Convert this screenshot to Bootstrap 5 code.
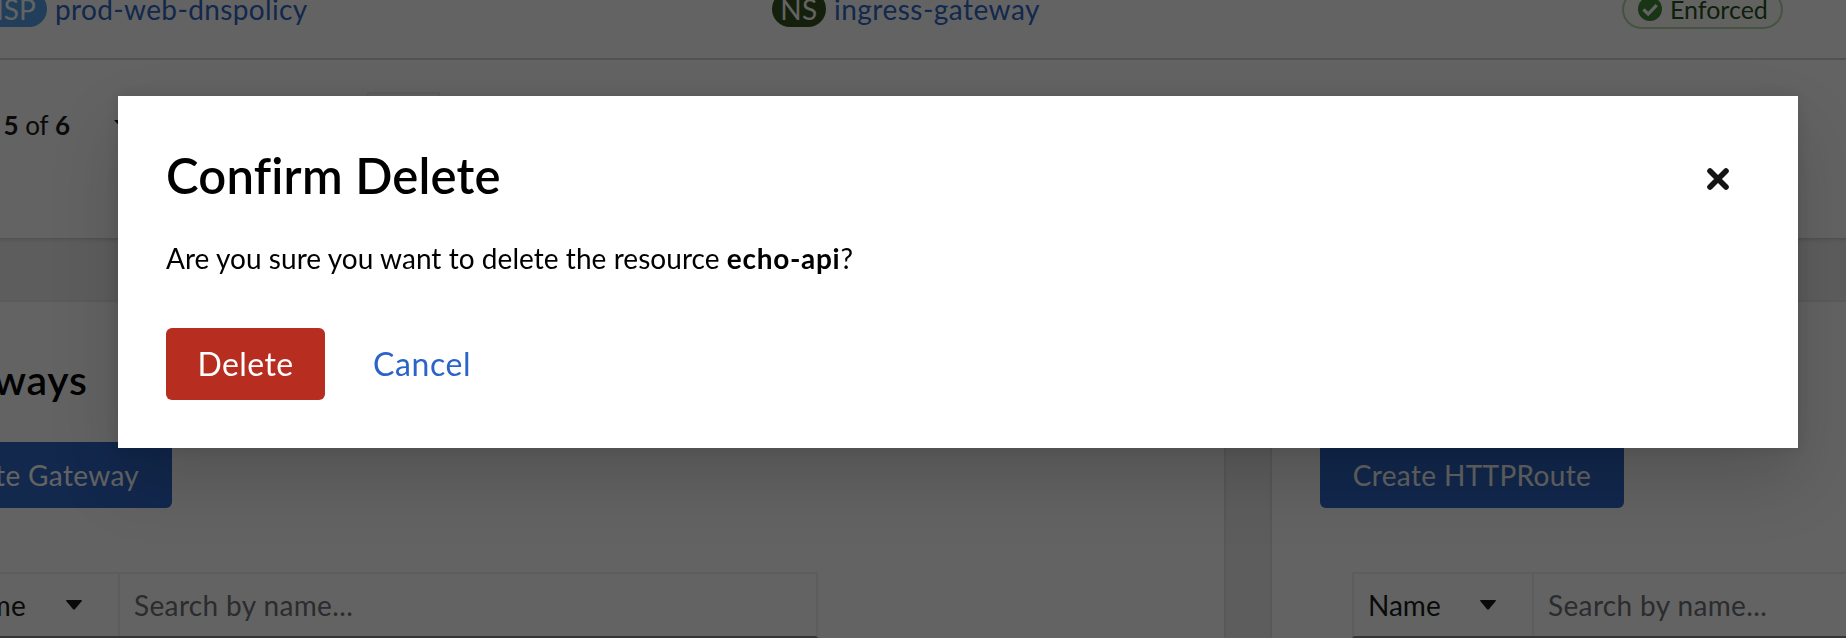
<!DOCTYPE html>
<html lang="en">
<head>
<meta charset="utf-8">
<title>Confirm Delete</title>
<link href="https://cdn.jsdelivr.net/npm/bootstrap@5.3.0/dist/css/bootstrap.min.css" rel="stylesheet">
<style>
html,body{overflow:hidden}
body{font-family:Lato,"Open Sans",sans-serif;font-size:28px;line-height:36px;color:#151515;background:#f0f0f0;height:638px}
.console{width:2784px;height:638px;overflow:hidden;margin-left:-144px}
.panel{background:#fff;box-shadow:0 2px 4px rgba(3,3,3,.12),0 0 4px rgba(3,3,3,.06)}
.policies{height:238px;display:flow-root}
.policy-row{height:100px;margin-top:-40px;border-bottom:2px solid #d2d2d2}
.cell-name{width:916px;padding-left:94px}
.cell-ns{width:850px}
.kind{height:36px;border-radius:18px;font-size:28px;line-height:36px;color:#fff;text-align:center}
.kind-dnsp{width:97px;background:#519de9}
.kind-ns{width:54px;background:#30501a;letter-spacing:.4px}
.res-link{color:#2b64c5;text-decoration:none;margin-left:8px}
.t-pol{letter-spacing:.36px}
.t-ing{letter-spacing:.48px}
.state{width:161px;height:39px;border:2px solid #b5d6a8;border-radius:20px;font-size:25px;color:#1e4f18;padding-left:14px;background:#fcfefa}
.pager{height:130px;padding:32px 0 0 112px}
.pager-text{width:102px;text-align:right;white-space:nowrap;font-size:26px;padding-top:15px}
.pager-caret{margin:28px 0 0 43px}
.page-box{width:73px;height:64px;border:2px solid #f0f0f0;margin-left:234px}
.grid-gap{gap:48px;margin-top:64px}
.resource-panel{width:1368px;height:400px;padding:54px 48px 0}
.panel-title{font-size:41px;font-weight:600;line-height:48px;color:#000;margin:0 0 38px;letter-spacing:.75px}
.btn-create{height:66px;border-radius:6px;background:#2b64c5;color:#fff;font-size:28px;line-height:36px;padding:14px 0;border:0;display:block;letter-spacing:.36px}
.filter{margin:64px 0 0 32px;height:66px;border:2px solid #f0f0f0;border-bottom-color:#8a8386}
.filter-kind{width:182px;padding:0 36px 0 15px;border-right:2px solid #f0f0f0}
.filter-kind.narrow{width:180px;padding-left:14px}
.filter-input{padding-left:14px;color:#6a6e73;letter-spacing:.36px}
.backdrop-dim{position:fixed;inset:0;background:rgba(3,3,3,.62)}
.modal-dialog.confirm{width:1680px;max-width:none;margin:96px 0 0 118px}
.confirm .modal-content{height:352px;border:0;border-radius:0;padding:48px;color:#000;box-shadow:0 32px 64px rgba(3,3,3,.16),0 0 12px rgba(3,3,3,.1)}
.confirm h1{font-size:49px;line-height:62px;font-weight:600;margin:0;letter-spacing:.2px;font-variant-ligatures:none}
.confirm .x-btn{border:0;background:none;padding:0;margin:24px 21px 0 0;width:22px;height:22px;display:block}
.x-btn svg{display:block}
.confirm p{margin:31px 0 0;line-height:42px}
.t-msg{letter-spacing:.05px}
.t-echo{letter-spacing:.7px}
.actions{margin-top:49px}
.actions .btn{height:72px;font-size:32px;line-height:72px;padding:0;border:0;border-radius:6px}
.actions .btn-del,.actions .btn-del:hover{width:159px;background:#b72e20;color:#fff;letter-spacing:.4px}
.actions .btn-cancel{margin-left:48px;color:#2b64c8;letter-spacing:.6px}
</style>
</head>
<body>
<main class="console">
  <section class="panel policies">
    <div class="policy-row d-flex align-items-center">
      <div class="cell-name d-flex"><span class="kind kind-dnsp">DNSP</span><a class="res-link" href="#"><span class="t-pol">prod-web-dnspolicy</span></a></div>
      <div class="cell-ns d-flex"><span class="kind kind-ns">NS</span><a class="res-link" href="#"><span class="t-ing">ingress-gateway</span></a></div>
      <div class="state d-flex align-items-center">
        <svg width="24" height="24" viewBox="0 0 24 24"><circle cx="12" cy="12" r="12" fill="#3e8635"/><path d="M5.5 12.5l4.7 4.5 8.5-8.8" fill="none" stroke="#fff" stroke-width="3.2"/></svg>
        <span class="ms-2">Enforced</span>
      </div>
    </div>
    <div class="pager d-flex align-items-start">
      <div class="pager-text"><b>5</b> of <b>6</b></div>
      <svg class="pager-caret" width="20" height="11" viewBox="0 0 20 11"><path d="M1 0h18l-9 10z" fill="#151515"/></svg>
      <div class="page-box"></div>
    </div>
  </section>
  <div class="d-flex grid-gap">
    <section class="panel resource-panel">
      <h2 class="panel-title">Gateways</h2>
      <button class="btn btn-create" style="width:268px">Create Gateway</button>
      <div class="filter d-flex" style="width:882px">
        <div class="filter-kind d-flex align-items-center justify-content-between"><span>Name</span><svg width="16" height="10" viewBox="0 0 16 10"><path d="M.8 0h14.4q1.2.3.4 1.3L8.9 9.2q-.9.9-1.8 0L.4 1.3Q-.3.3.8 0z" fill="#151515"/></svg></div>
        <div class="filter-input d-flex align-items-center">Search by name...</div>
      </div>
    </section>
    <section class="panel resource-panel">
      <h2 class="panel-title">&nbsp;</h2>
      <button class="btn btn-create" style="width:304px">Create HTTPRoute</button>
      <div class="filter d-flex" style="width:882px">
        <div class="filter-kind narrow d-flex align-items-center justify-content-between"><span>Name</span><svg width="16" height="10" viewBox="0 0 16 10"><path d="M.8 0h14.4q1.2.3.4 1.3L8.9 9.2q-.9.9-1.8 0L.4 1.3Q-.3.3.8 0z" fill="#151515"/></svg></div>
        <div class="filter-input d-flex align-items-center">Search by name...</div>
      </div>
    </section>
  </div>
</main>
<div class="backdrop-dim"></div>
<div class="modal d-block overflow-hidden" role="dialog">
  <div class="modal-dialog confirm">
    <div class="modal-content">
      <div class="d-flex justify-content-between align-items-start">
        <h1>Confirm Delete</h1>
        <button class="x-btn" aria-label="Close"><svg width="22" height="22" viewBox="0 0 22 22"><path d="M3 3l16 16M19 3L3 19" stroke="#151515" stroke-width="5.6" stroke-linecap="round"/></svg></button>
      </div>
      <p><span class="t-msg">Are you sure you want to delete the resource </span><b class="t-echo">echo-api</b>?</p>
      <div class="actions d-flex">
        <button class="btn btn-del">Delete</button>
        <button class="btn btn-cancel">Cancel</button>
      </div>
    </div>
  </div>
</div>
<script src="https://cdn.jsdelivr.net/npm/bootstrap@5.3.0/dist/js/bootstrap.bundle.min.js"></script>
</body>
</html>
